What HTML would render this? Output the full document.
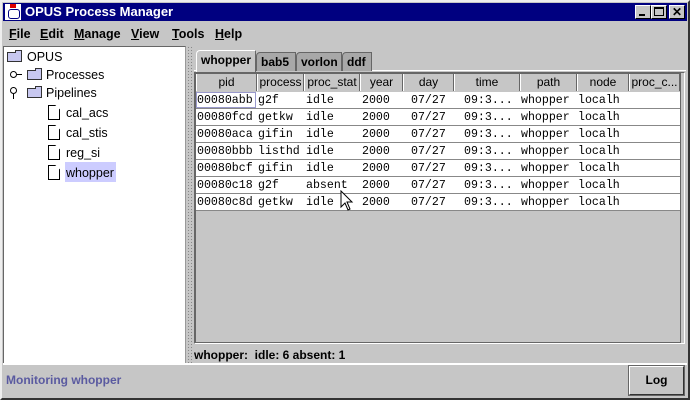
<html><head><style>
body{margin:0;width:690px;height:400px;background:#c6c6c6;position:relative;overflow:hidden;font-family:"Liberation Sans",sans-serif}
.a{position:absolute}
.b{font-weight:bold;font-size:12px;color:#000}
.mono{font-family:"Liberation Mono",monospace;font-size:11.6px}
.hd{position:absolute;top:74px;height:17px;background:#c6c6c6;border-right:1px solid #666;border-left:1px solid #fff;box-sizing:border-box;font-size:12px;text-align:center;line-height:17px;overflow:hidden;white-space:nowrap}
.row{position:absolute;left:196px;width:484px;height:17px;background:#fff;border-bottom:1px solid #888;box-sizing:border-box}
.c{position:absolute;top:1px;line-height:16px;white-space:nowrap}
.fold{position:absolute;width:15px;height:10px;background:#c8c8f0;border:1px solid #333;box-sizing:border-box}
.fold:before{content:"";position:absolute;right:-1px;top:-3px;width:7px;height:3px;background:#c8c8f0;border:1px solid #333;border-bottom:none;box-sizing:border-box}
.doc{position:absolute;width:12px;height:15px;background:#fff;border:1px solid #000;box-sizing:border-box;clip-path:polygon(0 0,60% 0,100% 30%,100% 100%,0 100%)}
.t{position:absolute;font-size:12.5px;line-height:16px}
.tab{position:absolute;top:52px;height:19px;box-sizing:border-box;border:1px solid #666;border-bottom:none;border-radius:4px 0 0 0;background:#a8a8a8;font-weight:bold;font-size:12px;line-height:18px;padding-left:4px}
</style></head><body>
<div class="a" style="left:0;top:0;width:690px;height:400px;box-sizing:border-box;border:2px solid;border-color:#eee #333 #333 #eee"></div>
<div class="a" style="left:3px;top:3px;width:684px;height:18px;background:#000080"></div>
<div class="a" style="left:5px;top:4px;width:16px;height:16px;background:#fff"><div class="a" style="left:3px;top:5px;width:10px;height:8px;border:1px solid #000080;border-radius:3px"></div><div class="a" style="left:5px;top:0;width:6px;height:4px;background:#d00"></div></div>
<div class="a b" style="left:25px;top:4px;color:#fff;font-size:13px;line-height:16px">OPUS Process Manager</div>
<div class="a" style="left:635px;top:5px;width:16px;height:14px;background:#c6c6c6;border:1px solid;border-color:#fff #000 #000 #fff;box-sizing:border-box"><div class="a" style="left:3px;top:8px;width:6px;height:2px;background:#000"></div></div>
<div class="a" style="left:651px;top:5px;width:16px;height:14px;background:#c6c6c6;border:1px solid;border-color:#fff #000 #000 #fff;box-sizing:border-box"><div class="a" style="left:2px;top:1px;width:10px;height:9px;border:1px solid #000;border-top-width:2px;box-sizing:border-box"></div></div>
<div class="a" style="left:669px;top:5px;width:16px;height:14px;background:#c6c6c6;border:1px solid;border-color:#fff #000 #000 #fff;box-sizing:border-box;font-size:12px;font-weight:bold;text-align:center;line-height:12px">✕</div>
<div class="a b" style="left:9px;top:27px;font-size:12.5px;word-spacing:0"><span style="position:absolute;left:0"><u>F</u>ile</span><span style="position:absolute;left:31px"><u>E</u>dit</span><span style="position:absolute;left:65px"><u>M</u>anage</span><span style="position:absolute;left:122px"><u>V</u>iew</span><span style="position:absolute;left:163px"><u>T</u>ools</span><span style="position:absolute;left:206px"><u>H</u>elp</span></div>
<div class="a" style="left:3px;top:46px;width:183px;height:319px;background:#fff;border:1px solid;border-color:#666 #999 #999 #666;box-sizing:border-box"></div>
<div class="fold" style="left:7px;top:52px"></div><div class="t" style="left:27px;top:49px">OPUS</div>
<div class="a" style="left:10px;top:71px;width:7px;height:7px;border:1px solid #000;border-radius:50%;box-sizing:border-box"></div><div class="a" style="left:17px;top:74px;width:5px;height:1px;background:#000"></div>
<div class="fold" style="left:27px;top:70px"></div><div class="t" style="left:46px;top:67px">Processes</div>
<div class="a" style="left:10px;top:87px;width:7px;height:7px;border:1px solid #000;border-radius:50%;box-sizing:border-box"></div><div class="a" style="left:13px;top:94px;width:1px;height:5px;background:#000"></div>
<div class="fold" style="left:27px;top:88px"></div><div class="t" style="left:46px;top:85px">Pipelines</div>
<div class="doc" style="left:48px;top:105px"></div><div class="t" style="left:66px;top:105px">cal_acs</div>
<div class="doc" style="left:48px;top:125px"></div><div class="t" style="left:66px;top:125px">cal_stis</div>
<div class="doc" style="left:48px;top:145px"></div><div class="t" style="left:66px;top:145px">reg_si</div>
<div class="doc" style="left:48px;top:165px"></div><div class="a" style="left:65px;top:162px;width:51px;height:20px;background:#ccccff"></div><div class="t" style="left:66px;top:165px">whopper</div>
<div class="a" style="left:187px;top:46px;width:6px;height:318px;background-image:radial-gradient(#888 0.6px,transparent 0.8px);background-size:3px 3px"></div>
<div class="a" style="left:194px;top:70px;width:492px;height:1px;background:#fff"></div>
<div class="tab" style="left:256px;width:40px">bab5</div>
<div class="tab" style="left:296px;width:46px">vorlon</div>
<div class="tab" style="left:342px;width:30px">ddf</div>
<div class="tab" style="left:196px;top:50px;height:22px;width:60px;background:#c6c6c6;border-left-color:#fff;border-top-color:#fff">whopper</div>
<div class="a" style="left:194px;top:72px;width:491px;height:272px;border:1px solid;border-color:#666 #fff #fff #666;box-sizing:border-box"></div>
<div class="a" style="left:195px;top:73px;width:486px;height:270px;border:1px solid #666;box-sizing:border-box"></div>
<div class="hd" style="left:196px;width:61px">pid</div>
<div class="hd" style="left:257px;width:47px">process</div>
<div class="hd" style="left:304px;width:56px">proc_stat</div>
<div class="hd" style="left:360px;width:43px">year</div>
<div class="hd" style="left:403px;width:51px">day</div>
<div class="hd" style="left:454px;width:66px">time</div>
<div class="hd" style="left:520px;width:57px">path</div>
<div class="hd" style="left:577px;width:52px">node</div>
<div class="hd" style="left:629px;width:51px">proc_c...</div>
<div id="rows"></div>
<script>
var d=[["00080abb","g2f","idle"],["00080fcd","getkw","idle"],["00080aca","gifin","idle"],["00080bbb","listhd","idle"],["00080bcf","gifin","idle"],["00080c18","g2f","absent"],["00080c8d","getkw","idle"]];
var h="";d.forEach(function(r,i){var y=92+i*17;h+='<div class="row mono" style="top:'+y+'px"><span class="c" style="left:1px">'+r[0]+'</span><span class="c" style="left:62px">'+r[1]+'</span><span class="c" style="left:110px">'+r[2]+'</span><span class="c" style="left:166px">2000</span><span class="c" style="left:215px">07/27</span><span class="c" style="left:268px">09:3...</span><span class="c" style="left:325px">whopper</span><span class="c" style="left:382px">localh</span></div>';});
document.getElementById("rows").innerHTML=h;
</script>
<div class="a" style="left:196px;top:92px;width:60px;height:16px;border:1px solid #9999cc;box-sizing:border-box"></div>
<svg class="a" style="left:340px;top:190px" width="14" height="22"><path d="M1 1 L1 17 L5 13 L8 20 L10 19 L7 12 L12 12 Z" fill="#fff" stroke="#000"/></svg>
<div class="a b" style="left:194px;top:348px;font-size:12px;line-height:14px">whopper:&nbsp; idle: 6 absent: 1</div>
<div class="a" style="left:3px;top:363px;width:684px;height:2px;background:#fff"></div>
<div class="a b" style="left:6px;top:373px;color:#5a5aa0;font-size:12px">Monitoring whopper</div>
<div class="a" style="left:629px;top:366px;width:55px;height:29px;border:1px solid;border-color:#fff #333 #333 #fff;box-sizing:border-box;outline:1px solid #666"></div>
<div class="a b" style="left:629px;top:373px;width:55px;text-align:center">Log</div>
</body></html>
